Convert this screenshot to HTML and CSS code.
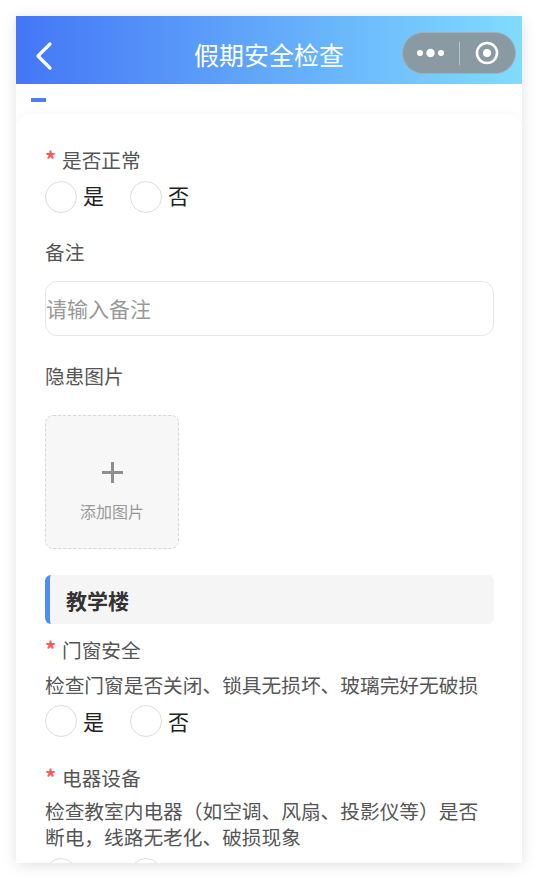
FILE: index.html
```html
<!DOCTYPE html>
<html lang="zh-CN">
<head>
    <meta charset="UTF-8">
    <meta name="viewport" content="width=device-width, initial-scale=1.0">
    <title>假期安全检查</title>
    <link rel="stylesheet" href="styles.css">
</head>
<body>
    <div class="phone">
        <!-- 顶部导航 -->
        <div class="navbar">
            <svg class="back" width="18" height="30" viewBox="0 0 18 30">
                <path d="M15 3 L3 15 L15 27" fill="none" stroke="#fff" stroke-width="3.2" stroke-linecap="round" stroke-linejoin="round"/>
            </svg>
            <div class="nav-title">假期安全检查</div>
            <div class="capsule">
                <svg width="32" height="12" viewBox="0 0 32 12">
                    <circle cx="5" cy="6" r="3" fill="#fff"/>
                    <circle cx="15.5" cy="6" r="4.2" fill="#fff"/>
                    <circle cx="26" cy="6" r="3" fill="#fff"/>
                </svg>
                <span class="capsule-line"></span>
                <svg width="24" height="24" viewBox="0 0 24 24">
                    <circle cx="12" cy="12" r="10" fill="none" stroke="#fff" stroke-width="2.6"/>
                    <circle cx="12" cy="12" r="4" fill="#fff"/>
                </svg>
            </div>
        </div>

        <div class="tab-mark"></div>

        <div class="card">
            <div class="label"><span class="star">*</span>是否正常</div>
            <div class="radios radios-top">
                <div class="radio"><span class="circle"></span><span class="radio-text">是</span></div>
                <div class="radio"><span class="circle"></span><span class="radio-text">否</span></div>
            </div>

            <div class="label label-gap">备注</div>
            <div class="input">请输入备注</div>

            <div class="label label-gap-big">隐患图片</div>
            <div class="upload">
                <span class="plus"></span>
                <span class="upload-text">添加图片</span>
            </div>

            <div class="section">教学楼</div>

            <div class="label first-item"><span class="star">*</span>门窗安全</div>
            <div class="desc">检查门窗是否关闭、锁具无损坏、玻璃完好无破损</div>
            <div class="radios radios-mid">
                <div class="radio"><span class="circle"></span><span class="radio-text">是</span></div>
                <div class="radio"><span class="circle"></span><span class="radio-text">否</span></div>
            </div>

            <div class="label item-gap"><span class="star">*</span>电器设备</div>
            <div class="desc desc-tight">检查教室内电器（如空调、风扇、投影仪等）是否断电，线路无老化、破损现象</div>
            <div class="radios radios-tight">
                <div class="radio"><span class="circle"></span></div>
                <div class="radio radio-next"><span class="circle"></span></div>
            </div>
        </div>
    </div>
</body>
</html>
```

FILE: styles.css
```css
html, body {
    height: 100%;
}
body {
    margin: 0;
    padding: 16px;
    box-sizing: border-box;
    background: #fff;
    font-family: "Noto Sans CJK SC", "Noto Sans", sans-serif;
    color: #555;
    overflow: hidden;
}
.phone {
    height: 847px;
    background: #fff;
    overflow: hidden;
    box-shadow: 0 2px 14px rgba(0, 0, 0, 0.12);
}

/* 顶部导航 */
.navbar {
    position: relative;
    height: 68px;
    display: flex;
    align-items: center;
    justify-content: center;
    background: linear-gradient(90deg, #4476f6, #80dcff);
}
.back {
    position: absolute;
    left: 19px;
    top: 25px;
}
.nav-title {
    font-size: 25px;
    color: #fff;
    margin-top: 8px;
    line-height: 32px;
}
.capsule {
    position: absolute;
    left: 386px;
    top: 16px;
    width: 114px;
    height: 42px;
    box-sizing: border-box;
    padding-left: 12px;
    display: flex;
    align-items: center;
    background: #8a9aa2;
    border: 1px solid #a3afb5;
    border-radius: 21px;
}
.capsule-line {
    width: 1px;
    height: 23px;
    margin: 0 15px 0 12px;
    background: #b9c3c8;
}

.tab-mark {
    width: 15px;
    height: 4px;
    margin: 14px 0 12px 15px;
    background: #4c7ff6;
}

.card {
    height: 760px;
    padding: 33px 28px 0 29px;
    border-radius: 16px 16px 0 0;
    box-shadow: 0 -2px 8px rgba(0, 0, 0, 0.03);
}

.label, .desc {
    font-size: 19.7px;
    line-height: 26px;
    white-space: nowrap;
}
.label-gap {
    margin-top: 26px;
}
.label-gap-big {
    margin-top: 27px;
}
.first-item {
    margin-top: 13px;
}
.item-gap {
    margin-top: 28px;
}
.star {
    display: inline-block;
    width: 17px;
    font-size: 22px;
    font-weight: 700;
    line-height: 20px;
    color: #f85a5a;
}
.desc {
    margin-top: 9px;
    white-space: normal;
}
.desc-tight {
    margin-top: 7px;
}

.radios {
    display: flex;
    gap: 26px;
    height: 32px;
}
.radios-top {
    margin-top: 8px;
}
.radios-top .radio-text {
    margin-bottom: 5px;
}
.radios-mid {
    margin-top: 7px;
}
.radios-tight {
    margin-top: 8px;
}
.radio {
    display: flex;
    align-items: center;
    gap: 6px;
    font-size: 21px;
    color: #222;
}
.radio-next {
    margin-left: 27px;
}
.circle {
    width: 30px;
    height: 30px;
    border: 1px solid #ddd;
    border-radius: 50%;
}

.input {
    margin-top: 16px;
    height: 55px;
    box-sizing: border-box;
    border: 1px solid #e6e6e6;
    border-radius: 12px;
    font-size: 21px;
    line-height: 53px;
    color: #999;
}

.upload {
    width: 134px;
    height: 134px;
    margin-top: 26px;
    box-sizing: border-box;
    display: flex;
    flex-direction: column;
    align-items: center;
    background: #f7f7f7;
    border: 1px dashed #d8d8d8;
    border-radius: 8px;
}
.plus {
    position: relative;
    width: 21px;
    height: 21px;
    margin-top: 46px;
}
.plus::before, .plus::after {
    content: "";
    position: absolute;
    background: #8e8e8e;
}
.plus::before {
    left: 0;
    right: 0;
    top: 9px;
    height: 3px;
}
.plus::after {
    top: 0;
    bottom: 0;
    left: 9px;
    width: 3px;
}
.upload-text {
    margin-top: 17px;
    font-size: 16px;
    line-height: 22px;
    color: #999;
}

.section {
    height: 49px;
    margin-top: 26px;
    box-sizing: border-box;
    padding-left: 16px;
    background: #f5f5f5;
    border-left: 5px solid #4f8cf6;
    border-radius: 6px;
    font-size: 21px;
    font-weight: 700;
    line-height: 51px;
    color: #333;
}
```
